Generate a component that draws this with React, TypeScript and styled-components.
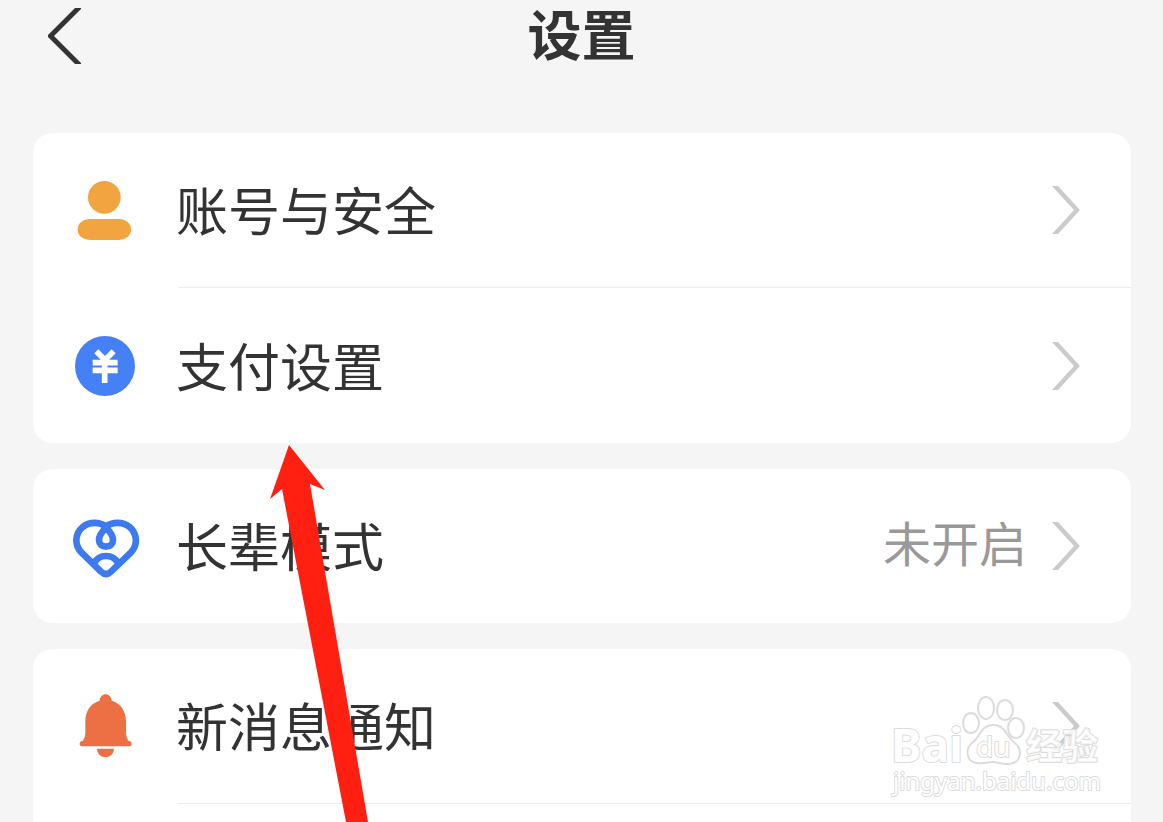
import React from "react";
import styled, { createGlobalStyle } from "styled-components";

const GlobalStyle = createGlobalStyle`
  * { box-sizing: border-box; }
  body {
    margin: 0;
    background: #f5f5f5;
    color: #333333;
    font-family: "Noto Sans CJK SC", "Liberation Sans", sans-serif;
  }
`;

const Screen = styled.div`
  position: relative;
  display: flex;
  flex-direction: column;
  height: 100vh;
  overflow: hidden;
`;

const Header = styled.header`
  display: grid;
  grid-template-columns: 1fr auto 1fr;
  align-items: start;
  height: 72px;
  padding: 6px 44px 0;
  flex: none;
`;

const BackButton = styled.button`
  display: flex;
  width: 40px;
  height: 60px;
  padding: 0;
  border: 0;
  background: none;
  cursor: pointer;
`;

const Title = styled.h1`
  margin: 0;
  font-family: "Liberation Sans", "Noto Sans CJK SC", sans-serif;
  font-size: 54px;
  line-height: 62px;
  font-weight: 700;
`;

const Groups = styled.main`
  display: flex;
  flex: 1;
  flex-direction: column;
  gap: 26px;
  padding: 61px 32px 0 33px;
`;

const Group = styled.section<{ $open?: boolean }>`
  flex: ${(p) => (p.$open ? "1 0 auto" : "none")};
  border-radius: ${(p) => (p.$open ? "20px 20px 0 0" : "20px")};
  background: #ffffff;
`;

const Row = styled.a`
  display: flex;
  align-items: center;
  height: 154px;
  padding: 0 50px 0 39px;
  color: inherit;
  text-decoration: none;
`;

const Divider = styled.hr`
  height: 1px;
  margin: 0 0 1px 145px;
  border: 0;
  background: #ececec;
`;

const RowIcon = styled.svg`
  width: 68px;
  height: 68px;
  margin-right: 36px;
  flex: none;
`;

const Label = styled.span`
  flex: 1;
  padding-bottom: 2px;
  font-size: 52px;
  line-height: 72px;
  white-space: nowrap;
`;

const Value = styled.span`
  margin-right: 24px;
  color: #999999;
  font-family: "Liberation Sans", "Noto Sans CJK SC", sans-serif;
  font-size: 48px;
  line-height: 72px;
`;

const Arrow = styled.svg`
  position: absolute;
  left: 269px;
  top: 444px;
  width: 100px;
  height: 378px;
  pointer-events: none;
`;

const Watermark = styled.svg`
  position: absolute;
  right: 43px;
  bottom: 12px;
  width: 240px;
  height: 130px;
  pointer-events: none;
`;

const WatermarkText = styled.text<{ $size: number; $weight: number }>`
  font-family: "Noto Sans", "Noto Sans CJK SC", sans-serif;
  font-size: ${(p) => p.$size}px;
  font-weight: ${(p) => p.$weight};
  paint-order: stroke;
`;

const Chevron = () => (
  <svg width="30" height="50" viewBox="0 0 30 50" aria-hidden="true">
    <path d="M1 1H7L29 25L7 49H1L23 25Z" fill="#cbcbcb" />
  </svg>
);

const AccountIcon = () => (
  <RowIcon viewBox="36 33 204 204" aria-hidden="true">
    <g fill="#f1a440">
      <circle cx="133" cy="97" r="49" />
      <rect x="53" y="162" width="160" height="63" rx="36" ry="31" />
    </g>
  </RowIcon>
);

const PayIcon = () => (
  <RowIcon viewBox="36 21 204 204" aria-hidden="true">
    <circle cx="135" cy="123" r="90" fill="#4680f6" />
    <path
      d="M109 79L135 105L161 79M98 113H173M98 136H173M134 100V174"
      fill="none"
      stroke="#ffffff"
      strokeWidth="17"
    />
  </RowIcon>
);

const HeartIcon = () => (
  <RowIcon viewBox="36 21 204 204" aria-hidden="true">
    <g fill="none" stroke="#3d7af0" strokeWidth="20" strokeLinejoin="round">
      <path d="M138 65C120 50 88 49 68 66C44 87 43 120 64 142L123 200Q138 214 153 200L213 142C234 120 232 87 209 66C188 49 156 50 138 65Z" />
      <path d="M138 68C127 79 117 91 117 105A21 20 0 0 0 159 105C159 91 149 79 138 68Z" />
      <path d="M103 174C117 146 159 146 174 174" />
    </g>
  </RowIcon>
);

const BellIcon = () => (
  <RowIcon viewBox="36 36 204 204" aria-hidden="true">
    <g fill="#ec7043">
      <path d="M119 62C120 36 154 36 155 62C183 70 198 94 198 124V160Q199 174 205 182C218 183 218 199 207 199H67C56 199 56 183 69 182Q76 174 76 160V124C76 94 91 70 119 62Z" />
      <path d="M111 206H162C160 240 113 240 111 206Z" />
    </g>
  </RowIcon>
);

export default function App() {
  return (
    <>
      <GlobalStyle />
      <Screen>
        <Header>
          <BackButton aria-label="返回">
            <svg width="40" height="60" viewBox="0 0 40 60" aria-hidden="true">
              <path d="M31 2H37V3L10 30L37 57V58H31L4 31V29Z" fill="#333333" />
            </svg>
          </BackButton>
          <Title>设置</Title>
        </Header>
        <Groups>
          <Group>
            <Row href="#account">
              <AccountIcon />
              <Label>账号与安全</Label>
              <Chevron />
            </Row>
            <Divider />
            <Row href="#payment">
              <PayIcon />
              <Label>支付设置</Label>
              <Chevron />
            </Row>
          </Group>
          <Group>
            <Row href="#senior">
              <HeartIcon />
              <Label>长辈模式</Label>
              <Value>未开启</Value>
              <Chevron />
            </Row>
          </Group>
          <Group $open>
            <Row href="#notifications">
              <BellIcon />
              <Label>新消息通知</Label>
              <Chevron />
            </Row>
            <Divider />
          </Group>
        </Groups>
        <Arrow viewBox="0 0 100 378" aria-hidden="true">
          <path d="M20 1L56 46L41 40L99 378H77L13 45L1 55Z" fill="#ff2012" />
        </Arrow>
        <Watermark viewBox="0 0 240 130">
          <g fill="#ffffff" stroke="#dcdcdc" strokeWidth="2" strokeLinejoin="round">
            <WatermarkText $size={46} $weight={700} x="11" y="82">Bai</WatermarkText>
            <ellipse cx="91" cy="43" rx="8" ry="10" />
            <ellipse cx="106" cy="28" rx="8" ry="11" />
            <ellipse cx="125" cy="30" rx="8" ry="10" />
            <ellipse cx="136" cy="48" rx="8" ry="10" />
            <path d="M113 45C126 45 126 57 135 63C144 71 140 84 128 84C120 84 117 82 113 82C107 82 102 84 97 83C86 82 85 69 92 63C101 56 101 45 113 45Z" />
            <WatermarkText $size={28} $weight={400} x="96" y="77">du</WatermarkText>
            <WatermarkText $size={36} $weight={700} x="146" y="80" fillOpacity="0.8">经验</WatermarkText>
            <WatermarkText $size={24} $weight={400} x="13" y="110">jingyan.baidu.com</WatermarkText>
          </g>
        </Watermark>
      </Screen>
    </>
  );
}
